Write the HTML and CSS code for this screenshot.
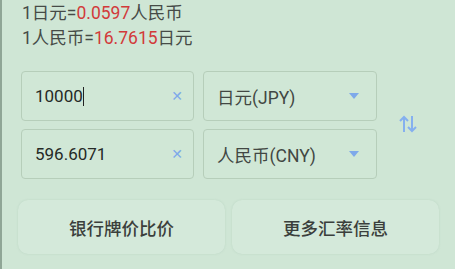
FILE: index.html
```html
<!DOCTYPE html>
<html lang="zh">
<head>
    <meta charset="UTF-8">
    <title>汇率换算</title>
    <link rel="stylesheet" href="styles.css">
</head>
<body>
    <div class="page">
        <div class="rates">
            <div class="rate-line">1日元=<span class="num">0.0597</span>人民币</div>
            <div class="rate-line">1人民币=<span class="num">16.7615</span>日元</div>
        </div>

        <div class="converter">
            <div class="fields">
                <div class="field-row">
                    <div class="amount-box">
                        <span class="amount">10000<span class="caret"></span></span>
                        <span class="clear-btn">&#x2715;</span>
                    </div>
                    <div class="currency-box">
                        <span>日元(JPY)</span>
                        <span class="arrow"></span>
                    </div>
                </div>
                <div class="field-row">
                    <div class="amount-box">
                        <span class="amount">596.6071</span>
                        <span class="clear-btn">&#x2715;</span>
                    </div>
                    <div class="currency-box">
                        <span>人民币(CNY)</span>
                        <span class="arrow"></span>
                    </div>
                </div>
            </div>
            <div class="swap">
                <svg width="18" height="20" viewBox="0 0 18 20">
                    <path d="M5 18V3M1 7l4-4 4 4" fill="none" stroke="#85b0ef" stroke-width="2"/>
                    <path d="M13 2v15M9 13l4 4 4-4" fill="none" stroke="#85b0ef" stroke-width="2"/>
                </svg>
            </div>
        </div>

        <div class="actions">
            <button class="action-btn">银行牌价比价</button>
            <button class="action-btn">更多汇率信息</button>
        </div>
    </div>
</body>
</html>
```

FILE: styles.css
```css
body {
    margin: 0;
    background-color: #cfe6d5;
    font-family: Roboto, "Noto Sans CJK SC", sans-serif;
    color: #3a3f3b;
}

.page {
    height: 269px;
    border-left: 2px solid #8fa696;
    box-sizing: border-box;
    overflow: hidden;
}

.rates {
    padding: 1px 0 0 20px;
}

.rate-line {
    height: 25px;
    line-height: 25px;
    font-size: 17.5px;
    color: #464b47;
}

.num {
    color: #d23a3a;
}

.converter {
    display: flex;
    align-items: center;
    margin: 20px 0 0 19px;
}

.fields {
    display: flex;
    flex-direction: column;
    gap: 8px;
}

.field-row {
    display: flex;
    gap: 9px;
}

.amount-box, .currency-box {
    display: flex;
    align-items: center;
    justify-content: space-between;
    height: 50px;
    box-sizing: border-box;
    border: 1.5px solid #b6ceba;
    border-radius: 4px;
    background-color: #d0e7d6;
}

.amount-box {
    width: 173px;
    padding: 0 10px 0 13px;
}

.currency-box {
    width: 174px;
    padding: 0 17px 0 13px;
    font-size: 17.5px;
    color: #424743;
}

.amount {
    font-size: 17px;
    color: #252a26;
    display: flex;
    align-items: center;
}

.caret {
    display: inline-block;
    width: 1px;
    height: 19px;
    background-color: #222;
}

.clear-btn {
    color: #7ea9ea;
    font-size: 14px;
    font-family: "DejaVu Sans", sans-serif;
}

.arrow {
    width: 0;
    height: 0;
    border-left: 5px solid transparent;
    border-right: 5px solid transparent;
    border-top: 6px solid #7ea9ea;
}

.swap {
    margin-left: 22px;
    padding-top: 2px;
}

.actions {
    display: flex;
    gap: 7px;
    margin: 21px 0 0 16px;
}

.action-btn {
    width: 207px;
    height: 54px;
    border: none;
    border-radius: 10px;
    background-color: #d4e9da;
    box-shadow: 0 0 2px rgba(150, 180, 160, 0.35);
    font-family: Roboto, "Noto Sans CJK SC", sans-serif;
    font-size: 17.5px;
    font-weight: 500;
    color: #3b3f3c;
}
```
